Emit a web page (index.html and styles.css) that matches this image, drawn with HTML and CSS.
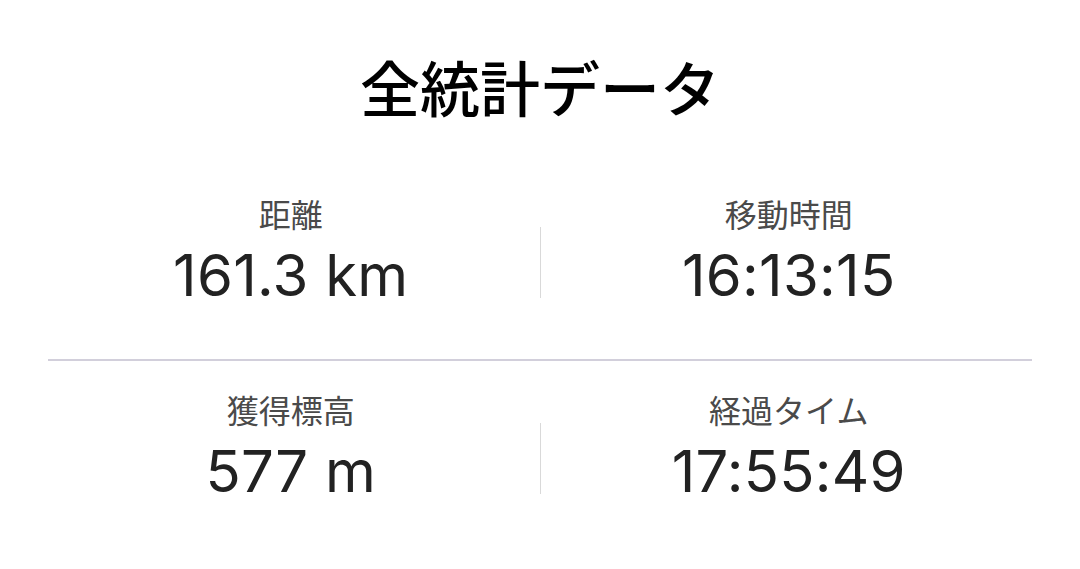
FILE: index.html
```html
<!DOCTYPE html>
<html lang="ja">
<head>
<meta charset="utf-8">
<link rel="stylesheet" href="styles.css">
</head>
<body>
<main class="page">
  <h1 class="title">全統計データ</h1>
  <section class="stats">
    <div class="row">
      <div class="cell cell-left">
        <div class="label">距離</div>
        <div class="value">161.3 km</div>
      </div>
      <div class="vdiv"></div>
      <div class="cell cell-right">
        <div class="label">移動時間</div>
        <div class="value">16:13:15</div>
      </div>
    </div>
    <div class="hdiv"></div>
    <div class="row row-second">
      <div class="cell cell-left">
        <div class="label">獲得標高</div>
        <div class="value">577 m</div>
      </div>
      <div class="vdiv"></div>
      <div class="cell cell-right">
        <div class="label">経過タイム</div>
        <div class="value">17:55:49</div>
      </div>
    </div>
  </section>
</main>
</body>
</html>
```

FILE: styles.css
```css
html, body {
  margin: 0;
  padding: 0;
  background: #ffffff;
}
body {
  font-family: Inter, "Noto Sans CJK JP", sans-serif;
}
.page {
  width: 1080px;
  height: 569px;
  overflow: hidden;
}
.title {
  margin: 46px 0 39px;
  height: 80px;
  line-height: 80px;
  font-size: 60px;
  font-weight: 500;
  text-align: center;
  color: #000000;
  font-family: "Noto Sans CJK JP", sans-serif;
}
.stats {
  margin: 0 48px 0 48px;
}
.row {
  display: grid;
  grid-template-columns: 1fr 1px 1fr;
  padding: 28px 0 52px;
}
.row-second {
  padding: 28px 0 40px;
}
.cell {
  display: flex;
  flex-direction: column;
  align-items: center;
  gap: 10px;
}
.cell-left {
  padding-right: 6px;
}
.cell-right {
  padding-left: 5px;
}
.label {
  height: 40px;
  line-height: 40px;
  font-size: 32px;
  color: #4a4a4a;
  font-family: "Noto Sans CJK JP", sans-serif;
}
.value {
  height: 64px;
  line-height: 64px;
  font-size: 58px;
  color: #222222;
  font-family: Inter, "Noto Sans CJK JP", sans-serif;
  letter-spacing: 0.3px;
}
.vdiv {
  align-self: start;
  margin-top: 34px;
  height: 71px;
  background: #d9d9d9;
}
.hdiv {
  height: 2px;
  background: #d2cfdb;
}
```
